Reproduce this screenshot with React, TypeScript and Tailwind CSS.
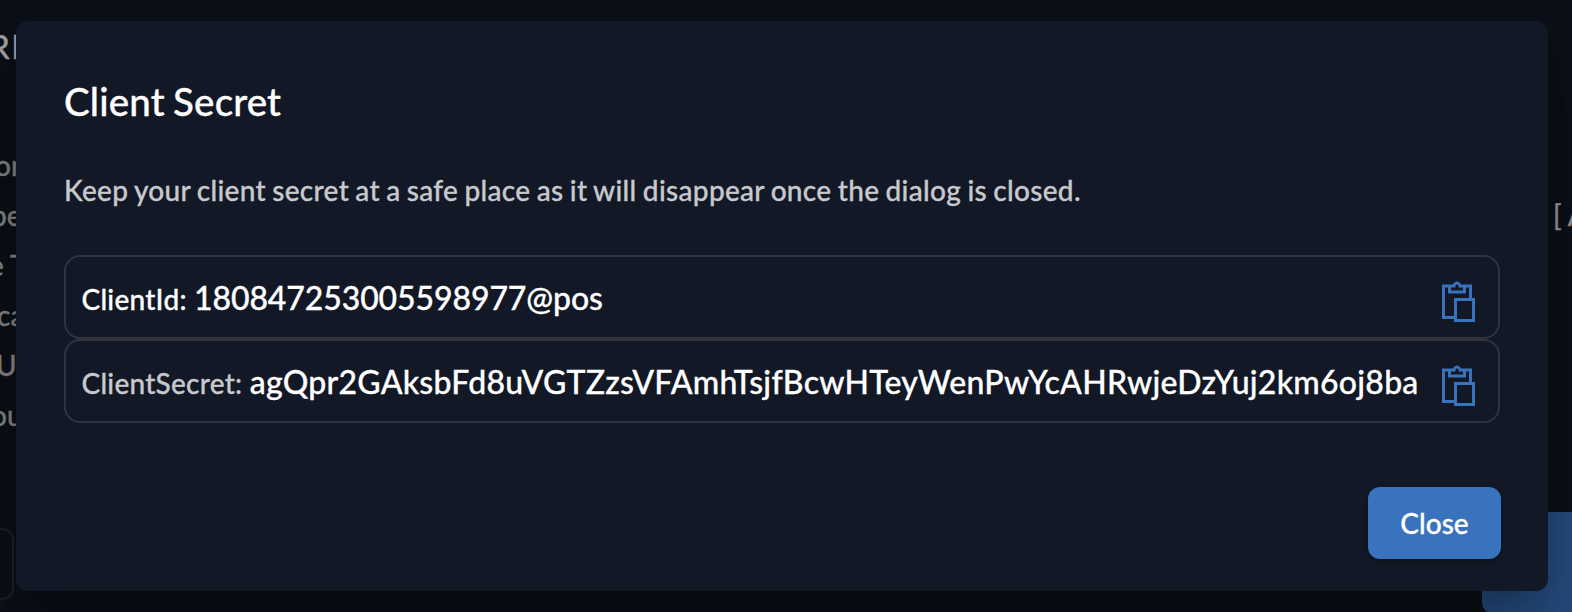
import { LiaClipboardSolid } from "react-icons/lia";

type Line = { text: string; indent: string };

const pageLines: Line[] = [
  { text: "on", indent: "-ml-[5px]" },
  { text: "pe", indent: "-ml-[9px]" },
  { text: "e T", indent: "-ml-[11px]" },
  { text: "ca", indent: "-ml-[3px]" },
  { text: "U", indent: "-ml-[4px]" },
  { text: "ou", indent: "-ml-[9px]" },
];

function Backdrop() {
  return (
    <div className="absolute inset-0 overflow-hidden bg-[#0c1018] text-[#858689]" aria-hidden="true">
      <div className="-ml-[11px] h-[140px] pt-[22px] text-[33px] leading-[48px] tracking-[1.5px] whitespace-pre text-[#a3a3a5]">
        RI
      </div>
      <div className="flex justify-between text-[28px] leading-[50px]">
        <div className="w-4">
          {pageLines.map((line) => (
            <div key={line.text} className={`${line.indent} whitespace-pre`}>
              {line.text}
            </div>
          ))}
        </div>
        <div className="w-[19px] pt-[50px] whitespace-pre text-[#98999b]">[ A</div>
      </div>
      <div className="flex items-start justify-between pt-[72px]">
        <div className="mt-4 h-[72px] w-[14px] rounded-r-xl border-2 border-l-0 border-[#1e2129]" />
        <div className="h-[102px] w-[90px] rounded-l-xl bg-[#264d80]" />
      </div>
    </div>
  );
}

type SecretRowProps = { label: string; value: string; labelColor: string; valueTracking: string };

function SecretRow({ label, value, labelColor, valueTracking }: SecretRowProps) {
  return (
    <div className="flex h-[84px] items-center justify-between rounded-2xl border-2 border-[#31333f] pr-4 pl-[15.5px]">
      <p className={`pt-[2px] text-[28px] tracking-[0.25px] whitespace-nowrap ${labelColor}`}>
        {label}: <span className={`text-[32px] text-white ${valueTracking}`}>{value}</span>
      </p>
      <button type="button" aria-label="Copy" className="mt-2 translate-x-[0.5px] text-[#3973be]">
        <LiaClipboardSolid size={48} />
      </button>
    </div>
  );
}

export default function App() {
  return (
    <div className="relative h-[612px] w-[1572px] overflow-hidden px-4 pt-[21px] font-['Lato',sans-serif] font-medium [-webkit-text-stroke:0.3px_currentColor]">
      <Backdrop />
      <div
        role="dialog"
        className="relative mr-2 h-[570px] w-[1532px] rounded-xl bg-[#121825] px-12 pt-[56px] shadow-[0_22px_30px_-14px_rgba(0,0,0,0.2),0_48px_76px_6px_rgba(0,0,0,0.14),0_18px_92px_16px_rgba(0,0,0,0.12)]"
      >
        <h1 className="text-[38.5px] leading-[48px] tracking-[0.15px] [word-spacing:-1.5px] text-white">
          Client Secret
        </h1>
        <p className="mt-[44px] text-[28px] leading-[42px] tracking-[0.31px] [word-spacing:-1.1px] text-[#c8c9cc]">
          Keep your client secret at a safe place as it will disappear once the dialog is closed.
        </p>
        <div className="mt-[44px]">
          <SecretRow
            label="ClientId"
            value="180847253005598977@pos"
            labelColor="text-white"
            valueTracking="tracking-[-0.1px]"
          />
          <SecretRow
            label="ClientSecret"
            value="agQpr2GAksbFd8uVGTZzsVFAmhTsjfBcwHTeyWenPwYcAHRwjeDzYuj2km6oj8ba"
            labelColor="text-[#c8c9cc]"
            valueTracking="tracking-[0.24px]"
          />
        </div>
        <div className="-mr-px mt-16 flex justify-end">
          <button
            type="button"
            className="h-[72px] w-[133px] rounded-xl bg-[#3973be] text-[28px] text-white shadow-[0_2px_4px_rgba(0,0,0,0.3)]"
          >
            Close
          </button>
        </div>
      </div>
    </div>
  );
}
